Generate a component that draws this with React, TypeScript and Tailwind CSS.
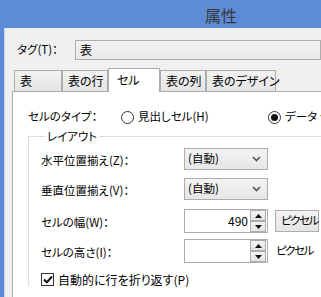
import React from 'react';

const font = "font-['Noto_Sans_CJK_JP','Noto_Sans',sans-serif] [font-feature-settings:'palt']";

const tabs = [
  { label: '表', w: 'w-[48px]' },
  { label: '表の行', w: 'w-[46px]' },
  { label: 'セル', w: 'w-[52px]', active: true },
  { label: '表の列', w: 'w-[46px]' },
  { label: '表のデザイン', w: 'w-[70px]' }
];

function Chevron() {
  return (
    <svg width="9" height="6" viewBox="0 0 9 6" className="text-[#555]">
      <path d="M1 1 L4.5 4.5 L8 1" fill="none" stroke="currentColor" strokeWidth="1.6" />
    </svg>
  );
}

function Select({ value }: { value: string }) {
  return (
    <div className="flex h-[22px] w-[84px] items-center justify-between border border-[#acacac] bg-gradient-to-b from-[#f3f3f3] to-[#e6e6e6] pl-[3px] pr-[6px]">
      <span>{value}</span>
      <Chevron />
    </div>
  );
}

function SpinHalf({ up }: { up?: boolean }) {
  return (
    <div className="flex h-[11px] w-[16px] items-center justify-center border border-[#acacac] bg-gradient-to-b from-[#f3f3f3] to-[#e4e4e4]">
      <svg width="7" height="4" viewBox="0 0 7 4">
        <path d={up ? 'M0 4 L3.5 0 L7 4 Z' : 'M0 0 L3.5 4 L7 0 Z'} fill="#111" />
      </svg>
    </div>
  );
}

function Spin({ value }: { value?: string }) {
  return (
    <div className="flex h-[24px] w-[84px] items-center justify-between border border-[#abadb3] bg-white pr-[1px]">
      <span className="flex-1 pr-[2px] text-right text-[12px]">{value}</span>
      <div className="flex flex-col">
        <SpinHalf up />
        <SpinHalf />
      </div>
    </div>
  );
}

function Radio({ checked, label }: { checked?: boolean; label: string }) {
  return (
    <div className="flex items-center gap-[4px] whitespace-nowrap">
      <span className="flex h-[13px] w-[13px] items-center justify-center rounded-full border border-[#333] bg-white">
        {checked && <span className="h-[7px] w-[7px] rounded-full bg-[#111]" />}
      </span>
      <span>{label}</span>
    </div>
  );
}

export default function App() {
  return (
    <div className={`flex h-[297px] w-[321px] flex-col overflow-hidden bg-[#5e8bd5] text-[11.5px] leading-none text-black ${font}`}>
      <div className="flex h-[28px] shrink-0 items-center pl-[205px] pt-[2px] text-[16px] text-[#383838]">属性</div>

      <div className="ml-[4px] flex min-h-0 flex-1 flex-col border-l border-[#c9d6ee] bg-[#f0f0f0] pt-[12px]">
        <div className="flex h-[20px] items-center">
          <span className="w-[70px] shrink-0 pl-[12px]">タグ(T)：</span>
          <div className="flex h-[20px] flex-1 items-center border border-[#acacac] bg-gradient-to-b from-[#f3f3f3] to-[#e8e8e8] pl-[4px] text-[12px]">表</div>
        </div>

        <div className="relative z-10 -mb-px mt-[8px] flex h-[24px] items-end pl-[9px] text-[12px]">
          {tabs.map((tab) =>
            tab.active ? (
              <div key={tab.label} className={`${tab.w} flex h-[24px] items-center border border-b-0 border-[#acacac] bg-white pb-[2px] pl-[8px]`}>
                {tab.label}
              </div>
            ) : (
              <div key={tab.label} className={`${tab.w} flex h-[22px] items-center border border-[#acacac] bg-gradient-to-b from-[#f2f2f2] to-[#e5e5e5] pl-[5px] whitespace-nowrap`}>
                {tab.label}
              </div>
            )
          )}
        </div>

        <div className="ml-[7px] flex-1 border-l border-t border-[#acacac] bg-white pl-[15px] pt-[18px]">
          <div className="flex h-[14px] items-center">
            <span className="w-[93px] shrink-0">セルのタイプ：</span>
            <div className="w-[147px] shrink-0">
              <Radio label="見出しセル(H)" />
            </div>
            <Radio checked label="データ セル(D)" />
          </div>

          <fieldset className="mt-[5px] w-[400px] border-l border-t border-[#dcdcdc] pl-[12px]">
            <legend className="ml-[4px] px-[2px] leading-[14px]">レイアウト</legend>

            <div className="mt-[5px] flex items-center">
              <span className="w-[143px] shrink-0 pt-[4px]">水平位置揃え(Z)：</span>
              <Select value="(自動)" />
            </div>
            <div className="mt-[8px] flex items-center">
              <span className="w-[143px] shrink-0 pt-[4px]">垂直位置揃え(V)：</span>
              <Select value="(自動)" />
            </div>
            <div className="mt-[9px] flex items-center">
              <span className="w-[143px] shrink-0 pt-[4px]">セルの幅(W)：</span>
              <Spin value="490" />
              <div className="ml-[7px] flex h-[22px] w-[44px] items-center border border-[#acacac] bg-gradient-to-b from-[#f3f3f3] to-[#e5e5e5] pl-[5px] tracking-[-1.5px] whitespace-nowrap">ピクセル</div>
            </div>
            <div className="mt-[6px] flex items-center">
              <span className="w-[143px] shrink-0 pt-[4px]">セルの高さ(I)：</span>
              <Spin />
              <span className="ml-[8px] tracking-[-1.5px] whitespace-nowrap">ピクセル</span>
            </div>
            <div className="mt-[10px] flex items-center gap-[4px]">
              <span className="flex h-[13px] w-[13px] items-center justify-center border border-[#333] bg-white">
                <svg width="10" height="9" viewBox="0 0 10 9">
                  <path d="M1 4.5 L3.8 7.3 L9 1.5" fill="none" stroke="#111" strokeWidth="2" />
                </svg>
              </span>
              <span className="whitespace-nowrap text-[12px]">自動的に行を折り返す(P)</span>
            </div>
          </fieldset>
        </div>
      </div>
    </div>
  );
}
